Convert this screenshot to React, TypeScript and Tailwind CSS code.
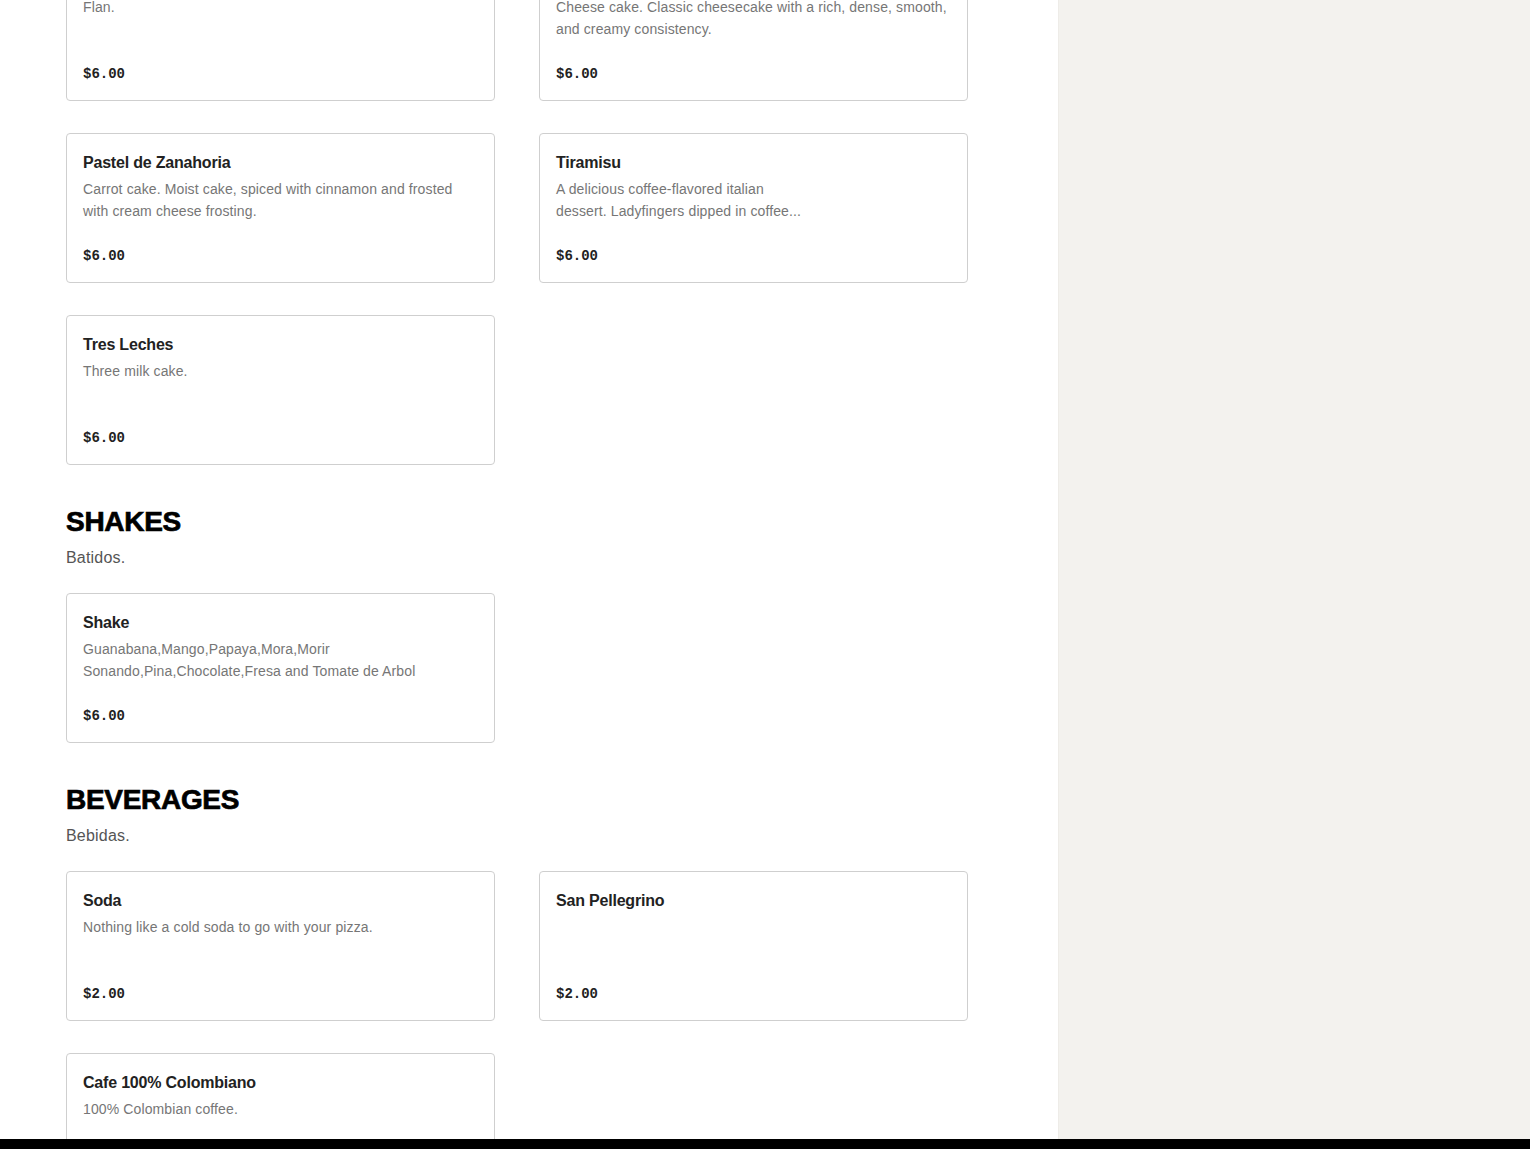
import React from 'react';

interface MenuItem {
  name: string;
  description: string;
  price: string;
}

interface Section {
  title?: string;
  subtitle?: string;
  items: MenuItem[];
}

const sections: Section[] = [
  {
    items: [
      { name: 'Flan', description: 'Flan.', price: '$6.00' },
      {
        name: 'Cheesecake',
        description: 'Cheese cake. Classic cheesecake with a rich, dense, smooth, and creamy consistency.',
        price: '$6.00',
      },
      {
        name: 'Pastel de Zanahoria',
        description: 'Carrot cake. Moist cake, spiced with cinnamon and frosted with cream cheese frosting.',
        price: '$6.00',
      },
      {
        name: 'Tiramisu',
        description: 'A delicious coffee-flavored italian\ndessert. Ladyfingers dipped in coffee...',
        price: '$6.00',
      },
      { name: 'Tres Leches', description: 'Three milk cake.', price: '$6.00' },
    ],
  },
  {
    title: 'SHAKES',
    subtitle: 'Batidos.',
    items: [
      {
        name: 'Shake',
        description: 'Guanabana,Mango,Papaya,Mora,Morir Sonando,Pina,Chocolate,Fresa and Tomate de Arbol',
        price: '$6.00',
      },
    ],
  },
  {
    title: 'BEVERAGES',
    subtitle: 'Bebidas.',
    items: [
      { name: 'Soda', description: 'Nothing like a cold soda to go with your pizza.', price: '$2.00' },
      { name: 'San Pellegrino', description: '', price: '$2.00' },
      { name: 'Cafe 100% Colombiano', description: '100% Colombian coffee.', price: '$2.00' },
    ],
  },
];

function ItemCard({ item }: { item: MenuItem }) {
  return (
    <div className="h-[150px] flex flex-col border border-[#cfcfcf] rounded-[4px] bg-white px-4 pt-4 pb-[15px]">
      <h4 className="mt-[1px] text-[16px] leading-6 font-semibold tracking-[-0.2px] text-[#222]">{item.name}</h4>
      <p className="mt-[3px] text-[14px] leading-[22px] tracking-[0.12px] text-[#767676] whitespace-pre-line">
        {item.description}
      </p>
      <p className="mt-auto text-[14px] leading-[22px] font-bold text-[#222] font-['Liberation_Mono',monospace]">
        {item.price}
      </p>
    </div>
  );
}

export default function App() {
  return (
    <div className="h-[1149px] flex flex-col overflow-hidden font-['Liberation_Sans',Arial,sans-serif]">
      <div className="flex-1 min-h-0 flex">
        <main className="w-[1058px] bg-white overflow-hidden">
          <div className="-mt-[49px] pl-[66px] w-[968px]">
            {sections.map((section, i) => (
              <section key={i} className={section.title ? 'mt-[39px]' : ''}>
                {section.title && (
                  <>
                    <h2 className="text-[28px] leading-9 font-black text-black tracking-[-0.3px] [-webkit-text-stroke:0.7px_black]">
                      {section.title}
                    </h2>
                    <p className="mt-[6px] text-[16px] leading-6 tracking-[0.2px] text-[#555]">{section.subtitle}</p>
                  </>
                )}
                <div className={`grid grid-cols-2 gap-x-[44px] gap-y-[32px] ${section.title ? 'mt-[23px]' : ''}`}>
                  {section.items.map((item) => (
                    <ItemCard key={item.name} item={item} />
                  ))}
                </div>
              </section>
            ))}
          </div>
        </main>
        <aside className="flex-1 bg-[#f3f2ee] border-l border-[#eeece8]" />
      </div>
      <div className="h-[10px] bg-black" />
    </div>
  );
}
